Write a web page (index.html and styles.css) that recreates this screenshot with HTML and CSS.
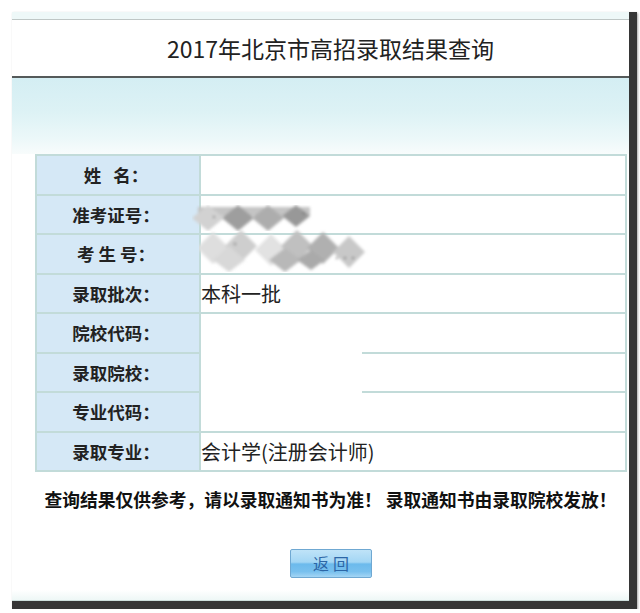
FILE: index.html
```html
<!DOCTYPE html>
<html lang="zh-CN">
<head>
<meta charset="utf-8">
<title>2017年北京市高招录取结果查询</title>
<link rel="stylesheet" href="styles.css">
</head>
<body>
<div class="frame">
  <div class="topstrip"></div>
  <div class="title">2017年北京市高招录取结果查询</div>
  <div class="band"></div>
  <table class="result">
    <tr><th>姓&nbsp;&nbsp;&nbsp;名：</th><td></td></tr>
    <tr><th>准考证号：</th><td class="blurcell">
      <svg class="mosaic m1" width="126" height="26" viewBox="0 0 126 26">
        <defs><filter id="b1"><feGaussianBlur stdDeviation="1.4"/></filter></defs>
        <g filter="url(#b1)">
          <rect x="6" y="2" width="112" height="9" fill="#c4c4c4"/>
          <polygon points="16,0 32,13 16,26 0,13" fill="#d2d2d2"/>
          <polygon points="46,0 62,13 46,26 30,13" fill="#9e9e9e"/>
          <polygon points="76,0 92,13 76,26 60,13" fill="#adadad"/>
          <polygon points="104,0 118,11 104,22 90,11" fill="#989898"/>
          <circle cx="22" cy="12" r="1" fill="#555"/>
          <circle cx="112" cy="8" r="1" fill="#555"/>
        </g>
      </svg>
    </td></tr>
    <tr><th>考&nbsp;生&nbsp;号：</th><td class="blurcell">
      <svg class="mosaic m2" width="172" height="44" viewBox="0 0 172 44">
        <defs><filter id="b2"><feGaussianBlur stdDeviation="1.6"/></filter></defs>
        <g filter="url(#b2)">
          <polygon points="14,4 30,20 14,36 -2,20" fill="#dedede"/>
          <polygon points="42,2 58,18 42,34 26,18" fill="#cecece"/>
          <polygon points="72,6 88,22 72,38 56,22" fill="#e2e2e2"/>
          <polygon points="98,2 114,18 98,34 82,18" fill="#c0c0c0"/>
          <polygon points="124,4 140,20 124,36 108,20" fill="#b0b0b0"/>
          <polygon points="150,8 166,24 150,40 134,24" fill="#c8c8c8"/>
          <polygon points="30,18 46,32 30,44 14,32" fill="#d8d8d8"/>
          <polygon points="86,20 102,32 86,44 70,32" fill="#b8b8b8"/>
          <polygon points="112,22 126,32 112,42 98,32" fill="#aaaaaa"/>
          <circle cx="36" cy="16" r="1" fill="#444"/>
          <circle cx="138" cy="30" r="0.9" fill="#444"/>
          <circle cx="146" cy="30" r="0.9" fill="#444"/>
          <circle cx="154" cy="30" r="0.9" fill="#444"/>
        </g>
      </svg>
    </td></tr>
    <tr><th>录取批次：</th><td>本科一批</td></tr>
    <tr><th>院校代码：</th><td></td></tr>
    <tr><th>录取院校：</th><td class="redact"></td></tr>
    <tr><th>专业代码：</th><td class="redact"></td></tr>
    <tr><th>录取专业：</th><td>会计学(注册会计师)</td></tr>
  </table>
  <p class="notice">查询结果仅供参考，请以录取通知书为准！ 录取通知书由录取院校发放！</p>
  <div class="actions"><button class="back" type="button">返回</button></div>
  <div class="bottomstrip"></div>
</div>
</body>
</html>
```

FILE: styles.css
```css
html, body {
  margin: 0;
  padding: 0;
  background: #ffffff;
}

body {
  font-family: "Noto Sans CJK SC", "Noto Sans", sans-serif;
  color: #1e1e1e;
}

.frame {
  margin: 12px 0 0 12px;
  width: 617px;
  height: 589px;
  display: flex;
  flex-direction: column;
  background: #ffffff;
  border-right: 8px solid #363636;
  border-bottom: 8px solid #363636;
  box-shadow: 1px 1px 2px rgba(0, 0, 0, 0.35);
}

.topstrip {
  height: 7px;
  background: #eef8f8;
  border-bottom: 1px solid #bfc7c6;
}

.title {
  height: 56px;
  line-height: 56px;
  padding-left: 20px;
  text-align: center;
  font-size: 23px;
  color: #222;
  border-bottom: 2px solid #555a5a;
}

.band {
  height: 76px;
  background: linear-gradient(#d4eef3 0%, #ddf2f5 45%, #ecf8f9 80%, #f8fcfc 100%);
}

.result {
  margin-left: 23px;
  width: 592px;
  border-collapse: collapse;
  table-layout: fixed;
}

.result tr {
  height: 39.5px;
}

.result th,
.result td {
  border: 2px solid #c2dbd9;
  padding: 0;
}

.result th {
  width: 158px;
  background: #d5e8f6;
  font-size: 17.5px;
  font-weight: bold;
  color: #222;
  text-align: center;
  padding-right: 4px;
}

.result td {
  font-size: 20px;
  color: #222;
  text-align: left;
  background: #ffffff;
  padding-left: 0;
}

.blurcell {
  position: relative;
}

.mosaic {
  position: absolute;
  display: block;
}

.m1 {
  left: -9px;
  top: 9px;
}

.m2 {
  left: -2px;
  top: -7px;
}

.redact {
  position: relative;
}

.redact::before {
  content: "";
  position: absolute;
  left: 0;
  top: -3px;
  width: 161px;
  height: 4px;
  background: #ffffff;
}

.notice {
  margin: 16px 0 0 0;
  padding-left: 20px;
  text-align: center;
  font-size: 17.75px;
  line-height: 22px;
  font-weight: bold;
  color: #111;
}

.actions {
  margin-top: 39px;
  padding-left: 21px;
  display: flex;
  justify-content: center;
}

.back {
  width: 82px;
  height: 29px;
  border: 1px solid #6fa8d2;
  border-radius: 2px;
  background: linear-gradient(#bfe3f8 0%, #a3d6f4 45%, #6cbaec 52%, #78c0ee 80%, #a4d5f4 100%);
  color: #2c66a6;
  font-family: "Noto Sans CJK SC", sans-serif;
  font-size: 16px;
  letter-spacing: 4px;
  padding: 0 0 0 4px;
  line-height: 27px;
}

.bottomstrip {
  margin-top: auto;
  height: 10px;
  background: linear-gradient(#ffffff, #eef7f6);
  border-bottom: 1px solid #cddfdc;
}
```
